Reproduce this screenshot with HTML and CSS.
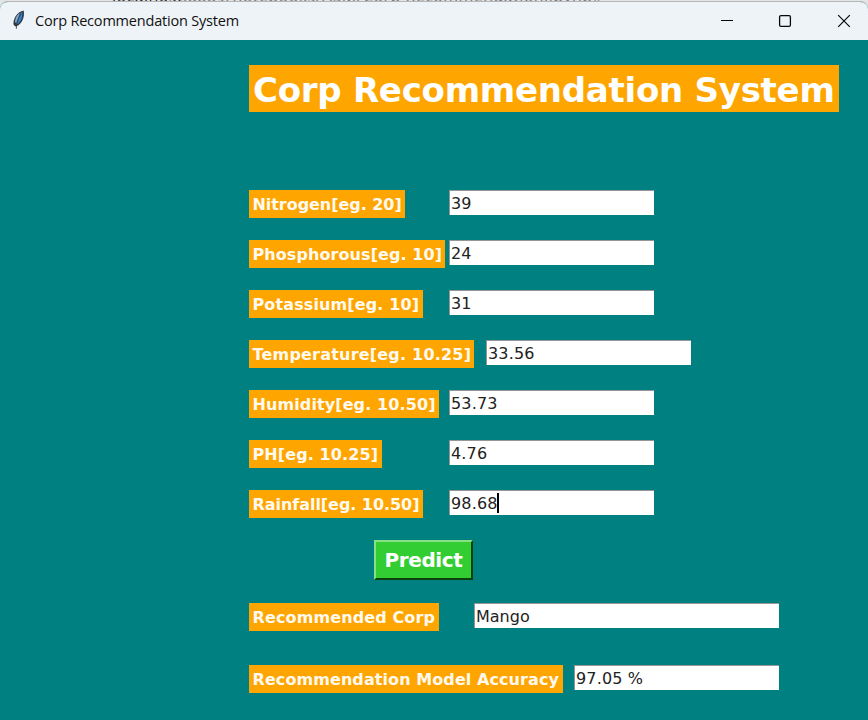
FILE: index.html
```html
<!DOCTYPE html>
<html lang="en">
<head>
<meta charset="utf-8">
<title>Corp Recommendation System</title>
<link rel="stylesheet" href="styles.css">
</head>
<body>
<div class="desktop"><span class="tab-mark"></span><span class="address"><b>localhost</b>:8889/notebooks/ASM/Corp Recommendation.ipynb#</span></div>
<div class="window">
  <header class="titlebar">
    <svg class="feather" width="14" height="20" viewBox="0 0 14 20">
      <path d="M3.200 16.500L1.500 14.500C1 9.500 4 2.500 11.600.500c1 4 .2 10.500-5.100 14.800z" fill="#2b3947"/>
      <path d="M4.200 14.300C4.500 9.500 6.500 4.500 10.300 2c.4 4.800-.8 9-4.400 12z" fill="#3b7dc4"/>
      <path d="M3 12.500C3 8.500 5 4.500 7.700 3.200L4.300 12.500z" fill="#8fa9bd"/>
      <path d="M9 4C6 8.500 4.600 13 4.300 18.800" fill="none" stroke="#26303a" stroke-width=".8"/>
    </svg>
    <span class="caption">Corp Recommendation System</span>
    <svg class="controls" width="132" height="14" viewBox="0 0 132 14" fill="none" stroke="#080808">
      <path d="M1 6.500h12" stroke-width="1.100"/>
      <rect x="59.600" y="1.600" width="10.800" height="10.800" rx="1.300" stroke-width="1.300"/>
      <path d="M118.200 1.200l11.600 11.600M129.800 1.200L118.200 12.800" stroke-width="1.200"/>
    </svg>
  </header>
  <main class="form">
    <h1 class="heading">Corp Recommendation System</h1>
    <div class="row"><label class="tag nitrogen">Nitrogen[eg. 20]</label><div class="entry">39</div></div>
    <div class="row"><label class="tag phosphorous">Phosphorous[eg. 10]</label><div class="entry">24</div></div>
    <div class="row"><label class="tag potassium">Potassium[eg. 10]</label><div class="entry">31</div></div>
    <div class="row temperature-row"><label class="tag temperature">Temperature[eg. 10.25]</label><div class="entry">33.56</div></div>
    <div class="row"><label class="tag humidity">Humidity[eg. 10.50]</label><div class="entry">53.73</div></div>
    <div class="row"><label class="tag ph">PH[eg. 10.25]</label><div class="entry">4.76</div></div>
    <div class="row"><label class="tag rainfall">Rainfall[eg. 10.50]</label><div class="entry">98.68<i class="caret"></i></div></div>
    <button class="predict">Predict</button>
    <div class="row result-row"><label class="tag result">Recommended Corp</label><div class="entry wide">Mango</div></div>
    <div class="row accuracy-row"><label class="tag accuracy">Recommendation Model Accuracy</label><div class="entry">97.05 %</div></div>
  </main>
</div>
</body>
</html>
```
FILE: styles.css
```css
* { box-sizing: border-box; }
html, body { margin: 0; height: 720px; overflow: hidden; }
body { background: #e2e4e5; font-family: "DejaVu Sans", sans-serif; }
.desktop { display: flex; height: 1px; overflow: hidden; }
.tab-mark { width: 112px; flex: none; }
.address { font: 16px/20px "Open Sans", sans-serif; letter-spacing: 0.45px; color: #777; white-space: nowrap; margin-top: -14px; }
.address b { font-weight: 400; color: #222; }
.window { height: 719px; border-top: 1px solid #b5b6b8; border-radius: 8px 8px 0 0; overflow: hidden; background: #008080; }
.titlebar { height: 38px; background: #eef3f8; display: flex; align-items: center; padding-left: 12px; }
.feather { flex: none; margin-bottom: 2px; }
.caption { margin-left: 9px; font: 14.5px/20px "Open Sans", sans-serif; letter-spacing: -0.2px; color: #111; white-space: nowrap; }
.controls { margin-left: auto; margin-right: 16px; flex: none; }
.form { padding: 25px 0 0 249px; }
.heading { margin: 0 0 78px; width: 590px; height: 47px; padding-left: 4px; background: #ffa500; color: #fff; font-size: 34px; line-height: 50px; font-weight: 700; letter-spacing: -0.26px; white-space: nowrap; }
.row { display: grid; grid-template-columns: 200px auto; justify-content: start; align-items: start; height: 50px; }
.temperature-row { grid-template-columns: 237px auto; }
.result-row { grid-template-columns: 225px auto; height: 62px; }
.accuracy-row { grid-template-columns: 325px auto; }
.tag { height: 28px; padding-left: 3.5px; background: #ffa500; color: #fffaf0; font-size: 16px; line-height: 29px; font-weight: 700; letter-spacing: 0.08px; white-space: nowrap; }
.nitrogen { width: 156px; letter-spacing: -0.05px; }
.phosphorous { width: 196px; }
.potassium { width: 174px; letter-spacing: 0.12px; }
.temperature { width: 225px; letter-spacing: 0.2px; }
.humidity { width: 190px; letter-spacing: 0.1px; }
.ph { width: 133px; letter-spacing: 0.1px; }
.rainfall { width: 174px; letter-spacing: -0.05px; }
.result { width: 190px; letter-spacing: 0.12px; }
.accuracy { width: 314px; }
.entry { width: 205px; height: 25px; padding-left: 1px; background: #fff; border-top: 1px solid #969696; border-left: 1px solid #969696; color: #222; font-size: 16px; letter-spacing: 0.15px; line-height: 26px; white-space: pre; display: flex; }
.wide { width: 305px; }
.caret { width: 2px; height: 20px; margin: 2px 0 0 -1px; background: #000; }
.predict { display: block; width: 99px; height: 40px; margin: 0 0 23px 125px; padding: 0; border: 2px solid; border-color: #84e184 #0c400c #0c400c #84e184; background: #32cd32; color: #fff; font: 700 20px/36px "DejaVu Sans", sans-serif; letter-spacing: -0.4px; }
.result-row .entry { letter-spacing: 0; }
```
